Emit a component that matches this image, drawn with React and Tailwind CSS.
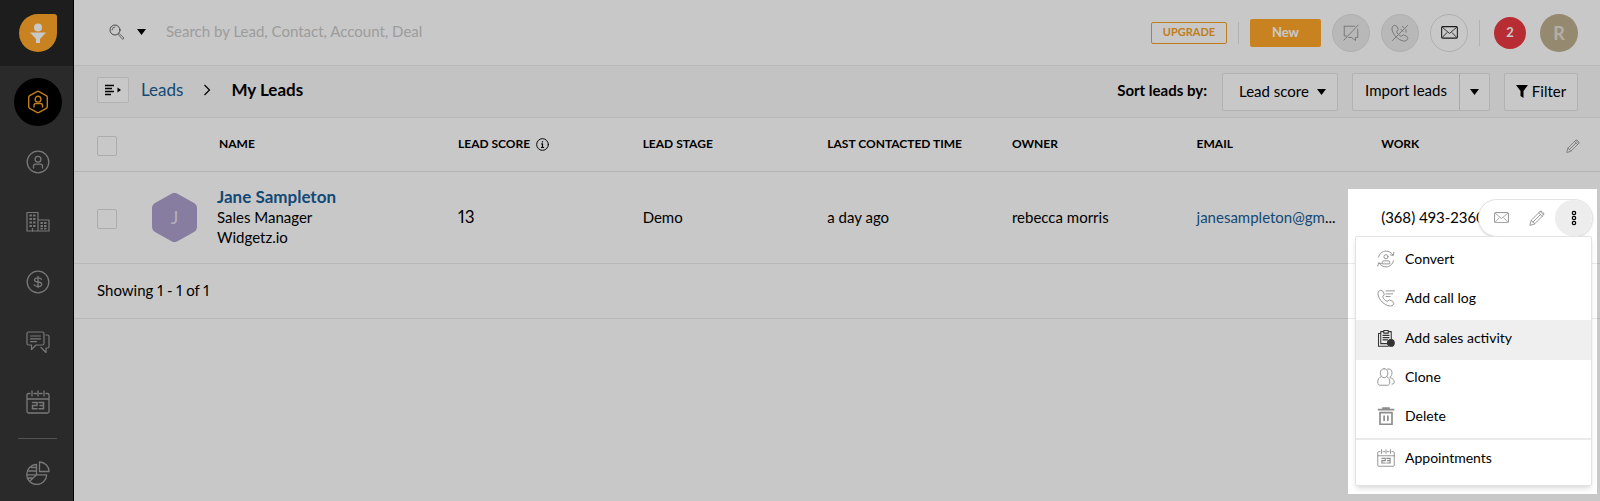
import clsx from "clsx";

function Icon({ className, size = 24, width = 1, children }) {
  return (
    <svg
      className={className}
      width={size}
      height={size}
      viewBox="0 0 24 24"
      fill="none"
      stroke="currentColor"
      strokeWidth={width}
      strokeLinecap="round"
      strokeLinejoin="round"
      aria-hidden="true"
    >
      {children}
    </svg>
  );
}

const LeadIcon = () => (
  <Icon width={1.4}>
    <path d="M11 1.600a2 2 0 0 1 2 0l7.300 4a2 2 0 0 1 1 1.800v9.200a2 2 0 0 1-1 1.800l-7.300 4a2 2 0 0 1-2 0l-7.300-4a2 2 0 0 1-1-1.800V7.400a2 2 0 0 1 1-1.800z" />
    <circle cx="12" cy="9.200" r="2.900" />
    <path d="M8 17v-1.500a2 2 0 0 1 2-2h4.500a2 2 0 0 1 2 2V17" />
  </Icon>
);

const ContactIcon = () => (
  <Icon width={1.3}>
    <circle cx="12" cy="12" r="10.800" />
    <circle cx="12" cy="9.300" r="2.900" />
    <path d="M7.500 18v-1.800a2 2 0 0 1 2-2h5a2 2 0 0 1 2 2V18" />
  </Icon>
);

const AccountIcon = () => (
  <Icon width={1.2}>
    <path d="M1 21V2.500h11V21M12 10h11v11H1" />
    <path d="M3.500 5.500h6M3.500 9h6M3.500 12.500h6M3.500 16h6M14.500 13h6M14.500 16h6M14.500 18.700h6" strokeDasharray="2.400 1.200" strokeWidth="1.800" strokeLinecap="butt" />
    <path d="M6.500 21v-2.500" />
  </Icon>
);

const DealIcon = () => (
  <Icon width={1.3}>
    <circle cx="12" cy="12" r="10.800" />
    <path d="M15.500 9.300c-.6-1-1.800-1.500-3.500-1.500-2 0-3.500.6-3.500 2.100s1.500 1.900 3.500 2.100 3.700.6 3.700 2.200-1.700 2.200-3.700 2.200c-1.900 0-3.200-.5-3.800-1.600M12 6.500v11" />
  </Icon>
);

const ChatIcon = () => (
  <Icon width={1.2}>
    <path d="M2.500 2h14a1.500 1.500 0 0 1 1.500 1.500v10a1.500 1.500 0 0 1-1.500 1.500H10l-4.500 4.500V15h-3A1.500 1.500 0 0 1 1 13.500v-10A1.500 1.500 0 0 1 2.500 2z" />
    <path d="M4.500 6h10M4.500 8.800h10M4.500 11.600h6" />
    <path d="M20 5h1.500A1.500 1.500 0 0 1 23 6.500v10a1.500 1.500 0 0 1-1.500 1.500H20v4.500L15 17.500" />
  </Icon>
);

const CalendarIcon = ({ size = 24, width = 1.3 }) => (
  <Icon size={size} width={width}>
    <path d="M4 3.500H2.500A1.500 1.500 0 0 0 1 5v16.500A1.500 1.500 0 0 0 2.500 23h19a1.500 1.500 0 0 0 1.500-1.500V5a1.500 1.500 0 0 0-1.500-1.500H20M8 3.500h2.500M13.500 3.500H16M1 9h22" />
    <path d="M6 1v5M12 1v5M18 1v5" />
    <path d="M6.500 12.500H11v3H6.500v3.200H11M13 12.500h4.500v6.200H13M14 15.500h3.500" strokeWidth="1.500" strokeLinejoin="miter" />
  </Icon>
);

const ReportIcon = () => (
  <Icon width={1.3}>
    <path d="M13.500 1v9.500H23A9.500 9.500 0 0 0 13.500 1z" />
    <path d="M10.500 3.500a10 10 0 1 0 10.200 10.300H10.500z" />
    <path d="M10.500 13.800 4 20M5 6.500h5.500M2.500 10h8M1.200 13.800h9.300M2 17h5" />
  </Icon>
);

const MailIcon = ({ size = 16, className }) => (
  <svg className={className} width={size} height={size * 0.75} viewBox="0 0 16 12" fill="none" stroke="currentColor" aria-hidden="true">
    <rect x=".6" y=".6" width="14.800" height="10.800" rx="1" />
    <path d="M1 1l7 6 7-6M1 11l4.800-5M15 11l-4.800-5" strokeWidth=".8" />
  </svg>
);

const PencilIcon = ({ size = 16 }) => (
  <Icon size={size} width={1.3}>
    <path d="M1.500 22.500l1.800-7L16.500 2.300a2.200 2.200 0 0 1 3 0l2.200 2.200a2.200 2.200 0 0 1 0 3L8.500 20.700z" />
    <path d="M14.500 4.300l5.200 5.200M3.300 15.500l5.200 5.200M5.800 18.200 17 7M16.700 2.300l5 5" />
  </Icon>
);

const handset =
  "M7 2.500 4.500 1.500C2 2.500.8 5 1.500 8c1.700 7 7.500 12.800 14.500 14.500 3 .7 5.500-.5 6.500-3l-1.500-3-4.500-2-3 2c-2.500-1-5-3.500-6-6l2-3z";

const ConvertIcon = () => (
  <Icon size={18} width={1.2}>
    <circle cx="12" cy="9" r="2.800" />
    <path d="M7 18v-1.500a2 2 0 0 1 2-2h6a2 2 0 0 1 2 2V18z" />
    <path d="M2 9.500C3.300 4.800 7.200 1.500 12 1.500c3.800 0 7.300 2 9.200 5M22.500 3l-.8 4.300L18 6.500M22 14.500c-1.300 4.700-5.200 8-10 8-3.800 0-7.300-2-9.200-5M1 21.500l1.200-4.300 3.800 1" />
  </Icon>
);

const CallLogIcon = () => (
  <Icon size={18} width={1.2}>
    <path d={handset} />
    <path d="M12 2.500h11.500M12 6.500h9M12 10h5.500" />
  </Icon>
);

const ActivityIcon = () => (
  <Icon size={18} width={1.4} className="text-[#333]">
    <path d="M8 3.500H5v16h11M16 3.500h3V13M9 2h6v3.500H9zM5 6H2v17h13" />
    <path d="M8 8.500h8M8 11.500h8M8 14.500h6" />
    <circle cx="18.500" cy="18.500" r="4.500" fill="currentColor" />
  </Icon>
);

const CloneIcon = () => (
  <Icon size={18} width={1.2}>
    <path d="M9.500 1C6.500 1 4.500 3 4.500 6.500S6.500 13 9.500 13s5-3 5-6.500S12.500 1 9.500 1z" />
    <path d="M5.500 11.500C2.500 13 1 15 1 18.500c0 3 1 4.500 3 4.500h10c2 0 3-1.500 3-4.500 0-3.500-1.500-5.500-4-7" />
    <path d="M14 1.300c3.500-.8 6 1.500 6 5 0 3-1.200 5-3 6.200 4 1.500 6 3.500 6 6.500 0 1.500-1 2.500-3 2.500" />
  </Icon>
);

const DeleteIcon = () => (
  <Icon size={18} width={2.2}>
    <path d="M1 3.500h22M8 3V1.500h8V3M4 7.500h16V23H4z" strokeLinecap="butt" strokeLinejoin="miter" />
    <path d="M9.500 12v6M14.500 12v6" />
  </Icon>
);

const Caret = ({ className }) => (
  <svg className={className} width="9" height="6" viewBox="0 0 9 6" aria-hidden="true">
    <path d="M0 0h9L4.500 6z" fill="currentColor" />
  </svg>
);

const navItems = [
  { label: "Leads", icon: LeadIcon, active: true },
  { label: "Contacts", icon: ContactIcon },
  { label: "Accounts", icon: AccountIcon },
  { label: "Deals", icon: DealIcon },
  { label: "Conversations", icon: ChatIcon },
  { label: "Calendar", icon: CalendarIcon },
];

const menuItems = [
  { label: "Convert", icon: ConvertIcon },
  { label: "Add call log", icon: CallLogIcon },
  { label: "Add sales activity", icon: ActivityIcon, active: true },
  { label: "Clone", icon: CloneIcon },
  { label: "Delete", icon: DeleteIcon },
];

function NavLink({ label, icon: NavIcon, active }) {
  return (
    <a href="#" aria-label={label} className="flex h-15 items-center justify-center">
      <span
        className={clsx(
          "flex size-12 items-center justify-center rounded-full",
          active ? "bg-black text-[#f5a027]" : "text-[#9a9a9a]"
        )}
      >
        <NavIcon />
      </span>
    </a>
  );
}

function Sidebar() {
  return (
    <nav className="w-[74px] shrink-0 border-r border-black bg-[#363636]">
      <a href="#" aria-label="Home" className="flex h-[66px] items-center justify-center bg-[#252525] pl-0.5">
        <svg width="38" height="38" viewBox="0 0 38 38" aria-hidden="true">
          <path d="M19 0h16a3 3 0 0 1 3 3v16A19 19 0 1 1 19 0z" fill="#ffa829" />
          <circle cx="19" cy="13.500" r="4" fill="#fff" />
          <path d="M11 18.500h16l-6 6.500v4h-4v-4z" fill="#fff" />
        </svg>
      </a>
      <div className="pt-1.5 pl-0.5">
        {navItems.map((item) => (
          <NavLink key={item.label} {...item} />
        ))}
        <hr className="mx-4 mt-1.5 mb-1 border-[#6b6b6b]" />
        <NavLink label="Reports" icon={ReportIcon} />
      </div>
    </nav>
  );
}

function RoundButton({ label, muted, children }) {
  return (
    <button
      type="button"
      aria-label={label}
      className={clsx(
        "flex size-[38px] items-center justify-center rounded-full border border-[#e0e0e0]",
        muted ? "bg-[#ebebeb] text-[#999]" : "text-[#222]"
      )}
    >
      {children}
    </button>
  );
}

function TopBar() {
  return (
    <header className="flex h-[66px] items-center border-b border-[#ebebeb] pr-[22px] pl-[35px]">
      <button type="button" aria-label="Search scope" className="flex items-center gap-3 pb-0.5">
        <Icon size={16} className="text-[#444]">
          <circle cx="9" cy="9" r="7.500" strokeWidth="1.300" />
          <path d="M4.500 9A4.500 4.500 0 0 1 9 4.500M14.500 15.500l1-1 7 6.500-1.500 1.700z" />
        </Icon>
        <Caret />
      </button>
      <input
        type="text"
        aria-label="Search"
        placeholder="Search by Lead, Contact, Account, Deal"
        className="ml-5 min-w-0 flex-1 pb-0.5 text-[15px] outline-none placeholder:text-[#c8c8c8]"
      />
      <button type="button" className="h-[22px] w-[76px] rounded-xs border border-[#f5a027] text-[11px] font-bold text-[#f5a027]">
        UPGRADE
      </button>
      <div className="mx-[11px] h-[22px] w-px bg-[#e3e3e3]" />
      <button type="button" className="h-7 w-[71px] rounded-xs bg-[#ffa829] text-[13px] font-bold text-white">
        New
      </button>
      <div className="ml-[11px] flex gap-[11px]">
        <RoundButton label="Chat" muted>
          <Icon size={18} width={1.3}>
            <path d="M3 3h14M21 7v11h-3v4l-5-4H9M3 3v13h3M2.500 21.500l19-20" />
          </Icon>
        </RoundButton>
        <RoundButton label="Phone" muted>
          <Icon size={18} width={1.3}>
            <path d={handset} />
            <path d="M2 22 22 2M15 3l4 4M20 8v3M13 7l3 3" />
          </Icon>
        </RoundButton>
        <RoundButton label="Email">
          <MailIcon size={17} />
        </RoundButton>
      </div>
      <div className="ml-[11px] h-[26px] w-px bg-[#e3e3e3]" />
      <button type="button" aria-label="2 notifications" className="ml-3.5 size-8 rounded-full bg-[#eb3941] text-[13px] font-bold text-white">
        2
      </button>
      <button type="button" aria-label="Account" className="ml-3.5 size-[38px] rounded-full bg-[#bfb08f] text-lg font-bold text-[#e6e0d4]">
        R
      </button>
    </header>
  );
}

function Toolbar() {
  return (
    <div className="flex h-[52px] items-center border-b border-[#ebebeb] bg-[#f9f9f9] pr-[22px] pl-[23px]">
      <div className="flex items-center pb-[3px]">
        <button type="button" aria-label="Views" className="flex h-[26px] w-8 items-center justify-center rounded-xs border border-[#e3e3e3] bg-white">
          <svg width="18" height="12" viewBox="0 0 18 12" aria-hidden="true">
            <path d="M1 1.500h9M1 4.500h7M1 7.500h9M1 10.500h6" stroke="currentColor" strokeWidth="1.400" />
            <path d="M13.500 3.500v5l3.500-2.500z" fill="currentColor" />
          </svg>
        </button>
        <a href="#" className="ml-3 text-[17px] text-[#175d96]">
          Leads
        </a>
        <svg className="mx-5 shrink-0" width="8" height="12" viewBox="0 0 8 12" fill="none" stroke="currentColor" aria-hidden="true">
          <path d="M1.500 1l5 5-5 5" strokeWidth="1.200" />
        </svg>
        <h1 className="text-[17px] font-bold">My Leads</h1>
      </div>
      <label htmlFor="sort" className="ml-auto pb-0.5 text-[15px] font-bold">
        Sort leads by:
      </label>
      <div className="relative ml-[15px]">
        <select id="sort" className="h-[38px] w-[116px] appearance-none rounded-xs border border-[#e3e3e3] bg-white pl-4 text-[15px]">
          <option>Lead score</option>
        </select>
        <Caret className="pointer-events-none absolute top-4 right-3" />
      </div>
      <div className="ml-3.5 flex h-[38px] rounded-xs border border-[#e3e3e3] bg-white">
        <button type="button" className="w-[106px] pb-0.5 text-[15px]">
          Import leads
        </button>
        <button type="button" aria-label="More import options" className="flex w-[30px] items-center justify-center border-l border-[#d8d8d8]">
          <Caret />
        </button>
      </div>
      <button type="button" className="ml-3.5 flex h-[38px] w-[74px] items-center justify-center gap-1 rounded-xs border border-[#e3e3e3] bg-white text-[15px]">
        <svg width="12" height="13" viewBox="0 0 12 13" aria-hidden="true">
          <path d="M0 0h12L7.500 6v7l-3-2V6z" fill="currentColor" />
        </svg>
        Filter
      </button>
    </div>
  );
}

function Checkbox({ label }) {
  return (
    <input
      type="checkbox"
      aria-label={label}
      className="mt-1 block size-5 appearance-none rounded-xs border border-[#dcdcdc]"
    />
  );
}

function RowActions() {
  return (
    <>
      <div className="absolute top-[27px] right-[7px] flex h-[38px] w-[115px] justify-end overflow-hidden rounded-full border border-[#e3e3e3] bg-white text-[#8c8c8c] shadow">
        <button type="button" aria-label="Send email" className="flex w-9 items-center justify-center">
          <MailIcon size={15} />
        </button>
        <button type="button" aria-label="Edit" className="flex w-9 items-center justify-center">
          <PencilIcon size={16} />
        </button>
        <button type="button" aria-label="More actions" className="flex w-[37px] items-center justify-center rounded-full bg-[#ededed] text-black">
          <svg width="6" height="16" viewBox="0 0 6 16" fill="none" stroke="currentColor" strokeWidth="1.200" aria-hidden="true">
            <circle cx="3" cy="3" r="1.700" />
            <circle cx="3" cy="8" r="1.700" />
            <circle cx="3" cy="13" r="1.700" />
          </svg>
        </button>
      </div>
      <div className="absolute top-16 right-2 z-10 w-[237px] rounded-xs border border-[#e3e3e3] bg-white py-[5px] text-sm shadow-md">
        {menuItems.map(({ label, icon: ItemIcon, active }) => (
          <button
            key={label}
            type="button"
            className={clsx(
              "flex w-full items-center gap-2.5 pb-1 pl-[21px] text-left text-[#8c8c8c]",
              active ? "h-10 bg-[#efefef]" : "h-[39px]"
            )}
          >
            <ItemIcon />
            <span className="text-black">{label}</span>
          </button>
        ))}
        <button type="button" className="flex h-[42px] w-full items-center gap-2.5 border-t-2 border-[#ebebeb] pb-1 pl-[21px] text-left text-[#8c8c8c]">
          <CalendarIcon size={18} width={1.2} />
          <span className="text-black">Appointments</span>
        </button>
      </div>
    </>
  );
}

function LeadsTable() {
  return (
    <table className="w-full table-fixed text-left text-[15px]">
      <colgroup>
        <col className="w-[78px]" />
        <col className="w-[306px]" />
        <col className="w-[12.1%]" />
        <col className="w-[12.1%]" />
        <col className="w-[12.1%]" />
        <col className="w-[12.1%]" />
        <col className="w-[12.1%]" />
        <col />
      </colgroup>
      <thead>
        <tr className="h-[53px] border-b border-[#e6e6e6] text-xs">
          <th className="pl-[23px]">
            <Checkbox label="Select all leads" />
          </th>
          <th className="pl-[67px]">NAME</th>
          <th>
            <span className="flex items-center gap-1.5">
              LEAD SCORE
              <Icon size={13} width={1.8}>
                <circle cx="12" cy="12" r="10.800" />
                <path d="M12 6.500v.8M10.500 11H12v6M10 17.500h4" strokeWidth="2.200" />
              </Icon>
            </span>
          </th>
          <th>LEAD STAGE</th>
          <th>LAST CONTACTED TIME</th>
          <th>OWNER</th>
          <th>EMAIL</th>
          <th className="pr-5">
            <span className="flex items-center justify-between">
              WORK
              <button type="button" aria-label="Edit columns" className="pt-1 text-[#8c8c8c]">
                <PencilIcon size={14} />
              </button>
            </span>
          </th>
        </tr>
      </thead>
      <tbody>
        <tr className="h-[92px] border-b border-[#ebebeb]">
          <td className="pl-[23px]">
            <Checkbox label="Select Jane Sampleton" />
          </td>
          <td>
            <div className="flex items-center gap-5">
              <svg width="45" height="49" viewBox="0 0 45 49" aria-hidden="true">
                <path d="M19.500.8a6 6 0 0 1 6 0l16.500 9.200a6 6 0 0 1 3 5.200v18.600a6 6 0 0 1-3 5.200l-16.500 9.200a6 6 0 0 1-6 0L3 39a6 6 0 0 1-3-5.200V15.200A6 6 0 0 1 3 10z" fill="#ada0cc" />
                <text x="22.500" y="31" textAnchor="middle" fontSize="18" fill="#e4deee">
                  J
                </text>
              </svg>
              <div className="leading-5">
                <a href="#" className="block text-[17px] leading-5 font-bold text-[#175d96]">
                  Jane Sampleton
                </a>
                <p>Sales Manager</p>
                <p>Widgetz.io</p>
              </div>
            </div>
          </td>
          <td className="text-[17px]">13</td>
          <td>Demo</td>
          <td>a day ago</td>
          <td>rebecca morris</td>
          <td>
            <a href="#" className="text-[#175d96]">
              janesampleton@gm
            </a>
            ...
          </td>
          <td className="relative">
            (368) 493-2360
            <RowActions />
          </td>
        </tr>
      </tbody>
    </table>
  );
}

export default function App() {
  return (
    <div className="relative flex h-screen overflow-hidden bg-white font-['Lato',sans-serif] text-black proportional-nums">
      <Sidebar />
      <main className="min-w-0 flex-1">
        <TopBar />
        <Toolbar />
        <LeadsTable />
        <p className="flex h-[55px] items-center border-b border-[#ebebeb] pl-[23px] text-[15px]">Showing 1 - 1 of 1</p>
      </main>
      {/* dims everything except the highlighted row menu */}
      <div className="pointer-events-none absolute top-[189px] right-[3px] z-20 h-[305px] w-[249px] shadow-[0_0_0_2000px_rgba(0,0,0,0.216)]" />
    </div>
  );
}
